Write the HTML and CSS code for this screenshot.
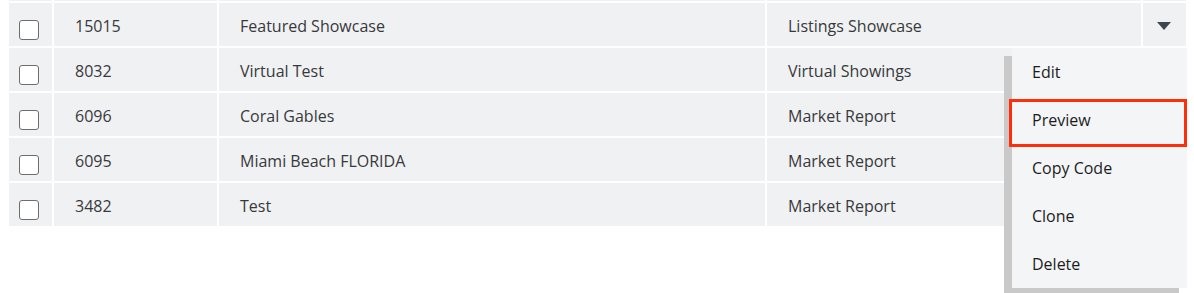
FILE: index.html
```html
<!DOCTYPE html>
<html>
<head>
<meta charset="utf-8">
<link rel="stylesheet" href="styles.css">
</head>
<body>
<div class="wrap">
  <table class="grid">
    <colgroup>
      <col class="c-check"><col class="c-id"><col class="c-name"><col class="c-type"><col class="c-act">
    </colgroup>
    <tbody>
      <tr class="row"><td></td><td></td><td></td><td></td><td></td></tr>
      <tr class="row">
        <td class="cell-check"><span class="box"></span></td>
        <td class="cell">15015</td>
        <td class="cell">Featured Showcase</td>
        <td class="cell">Listings Showcase</td>
        <td class="cell-act"><span class="caret"></span></td>
      </tr>
      <tr class="row">
        <td class="cell-check"><span class="box"></span></td>
        <td class="cell">8032</td>
        <td class="cell">Virtual Test</td>
        <td class="cell">Virtual Showings</td>
        <td class="cell-act"></td>
      </tr>
      <tr class="row">
        <td class="cell-check"><span class="box"></span></td>
        <td class="cell">6096</td>
        <td class="cell">Coral Gables</td>
        <td class="cell">Market Report</td>
        <td class="cell-act"></td>
      </tr>
      <tr class="row">
        <td class="cell-check"><span class="box"></span></td>
        <td class="cell">6095</td>
        <td class="cell">Miami Beach FLORIDA</td>
        <td class="cell">Market Report</td>
        <td class="cell-act"></td>
      </tr>
      <tr class="row">
        <td class="cell-check"><span class="box"></span></td>
        <td class="cell">3482</td>
        <td class="cell">Test</td>
        <td class="cell">Market Report</td>
        <td class="cell-act"></td>
      </tr>
    </tbody>
  </table>
  <ul class="menu">
    <li class="item">Edit</li>
    <li class="item item-marked">Preview</li>
    <li class="item">Copy Code</li>
    <li class="item">Clone</li>
    <li class="item">Delete</li>
  </ul>
</div>
</body>
</html>
```
FILE: styles.css
```css
html, body {
  margin: 0;
  padding: 0;
  background: #ffffff;
}
body {
  font-family: "Open Sans", "Noto Sans", sans-serif;
  font-size: 16px;
  color: #38393b;
}
.wrap {
  position: relative;
  height: 293px;
  overflow: hidden;
}
.grid {
  border-collapse: separate;
  border-spacing: 2px;
  margin: -44px 0 0 7px;
  width: 1181px;
  table-layout: fixed;
}
.c-check { width: 43px; }
.c-id { width: 163px; }
.c-name { width: 546px; }
.c-type { width: 374px; }
.c-act { width: 43px; }
.row td {
  height: 43px;
  padding: 0;
  background: #f0f1f3;
  box-sizing: border-box;
}
.row .cell {
  padding: 2px 0 0 21px;
  vertical-align: middle;
  white-space: nowrap;
}
.row .cell-check {
  vertical-align: top;
  padding: 17px 0 0 10px;
}
.box {
  display: block;
  width: 18px;
  height: 18px;
  border: 1px solid #6d6d6d;
  border-radius: 3px;
  background: #ffffff;
}
.row .cell-act {
  text-align: center;
  vertical-align: middle;
}
.caret {
  display: inline-block;
  width: 0;
  height: 0;
  border-left: 7.5px solid transparent;
  border-right: 7.5px solid transparent;
  border-top: 8px solid #3e4650;
  vertical-align: middle;
  margin-left: -1px;
}
.menu {
  position: absolute;
  left: 1012px;
  top: 48px;
  width: 175px;
  margin: 0;
  padding: 0;
  list-style: none;
  background: #f4f5f7;
  box-shadow: -8px 8px 0 #c9c9c9;
}
.item {
  height: 48px;
  line-height: 48px;
  padding-left: 20px;
  color: #1c1c1e;
  position: relative;
}
.item-marked::after {
  content: "";
  position: absolute;
  left: -3px;
  top: 3px;
  right: 0;
  bottom: -3px;
  border: 3px solid #ff2d0a;
}
```
